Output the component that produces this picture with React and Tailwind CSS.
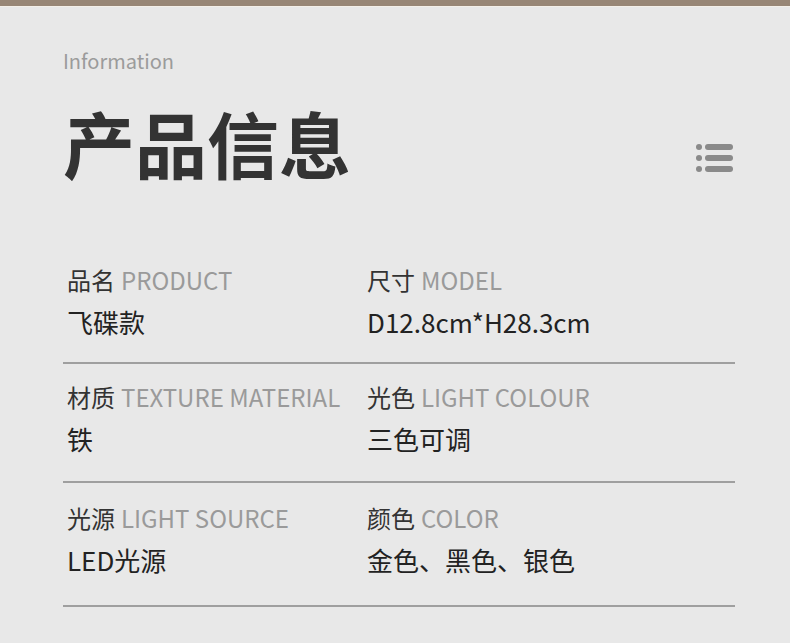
import React from "react";

const font = { fontFamily: '"Noto Sans CJK SC", "Noto Sans", sans-serif' };

function Cell({ zh, en, value }) {
  return (
    <div className="flex flex-col">
      <div className="flex items-baseline text-[24px] leading-[32px]">
        <span className="text-[#333333]">{zh}</span>
        <span className="ml-[6px] text-[#9a9a9a]">{en}</span>
      </div>
      <div className="mt-[10px] text-[26px] leading-[32px] text-[#222222]">{value}</div>
    </div>
  );
}

function Row({ a, b, pad }) {
  return (
    <div className={`grid grid-cols-[300px_1fr] pl-[4px] ${pad} border-b-2 border-[#9f9f9f]`}>
      <Cell {...a} />
      <Cell {...b} />
    </div>
  );
}

export default function App() {
  return (
    <div className="w-[790px] h-[643px] bg-[#e8e8e8] overflow-hidden" style={font}>
      <div className="h-[6px] bg-[#978676]" />
      <div className="h-[1px] bg-[#f3efe8]" />
      <div className="pl-[63px] pr-[55px]">
        <div className="pt-[40px] text-[20px] leading-[28px] text-[#9b9b9b]">Information</div>
        <div className="mt-[22px] flex items-start justify-between">
          <div className="text-[72px] leading-[90px] font-bold text-[#333333]">产品信息</div>
          <svg width="40" height="30" viewBox="0 0 40 30" className="mt-[46px]">
            <g fill="#8a8a8a">
              <circle cx="4" cy="4" r="3" />
              <circle cx="4" cy="15" r="3" />
              <circle cx="4" cy="26" r="3" />
              <rect x="10" y="1" width="28" height="6" rx="3" />
              <rect x="10" y="12" width="28" height="6" rx="3" />
              <rect x="10" y="23" width="28" height="6" rx="3" />
            </g>
          </svg>
        </div>
        <div className="mt-[77px]">
          <Row
            pad="pt-0 pb-[24px]"
            a={{ zh: "品名", en: "PRODUCT", value: "飞碟款" }}
            b={{ zh: "尺寸", en: "MODEL", value: "D12.8cm*H28.3cm" }}
          />
          <Row
            pad="pt-[17px] pb-[26px]"
            a={{ zh: "材质", en: "TEXTURE MATERIAL", value: "铁" }}
            b={{ zh: "光色", en: "LIGHT COLOUR", value: "三色可调" }}
          />
          <Row
            pad="pt-[19px] pb-[29px]"
            a={{ zh: "光源", en: "LIGHT SOURCE", value: "LED光源" }}
            b={{ zh: "颜色", en: "COLOR", value: "金色、黑色、银色" }}
          />
        </div>
      </div>
    </div>
  );
}
